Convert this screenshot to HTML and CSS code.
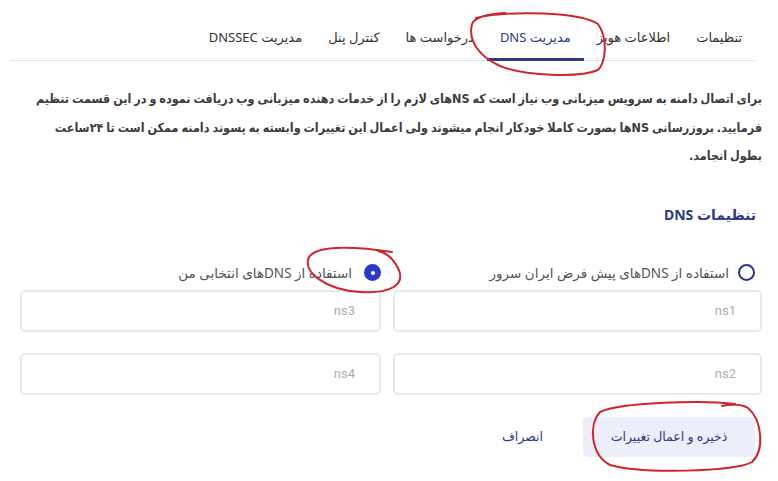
FILE: index.html
```html
<!DOCTYPE html>
<html lang="fa" dir="rtl">
<head>
  <meta charset="UTF-8">
  <meta name="viewport" content="width=device-width, initial-scale=1.0">
  <title>مدیریت DNS</title>
  <link rel="stylesheet" href="styles.css">
</head>
<body>

  <nav class="tabs">
    <a class="tab">تنظیمات</a>
    <a class="tab">اطلاعات هویز</a>
    <a class="tab active">مدیریت DNS</a>
    <a class="tab">درخواست ها</a>
    <a class="tab">کنترل پنل</a>
    <a class="tab">مدیریت DNSSEC</a>
  </nav>

  <div class="page">
    <p class="intro">برای اتصال دامنه به سرویس میزبانی وب نیاز است که NSهای لازم را از خدمات دهنده میزبانی وب دریافت نموده و در این قسمت تنظیم فرمایید. بروزرسانی NSها بصورت کاملا خودکار انجام میشوند ولی اعمال این تغییرات وابسته به پسوند دامنه ممکن است تا ۲۴ساعت بطول انجامد.</p>

    <h3 class="section-title">تنظیمات DNS</h3>

    <div class="grid options">
      <label class="option">
        <input type="radio" name="dns-mode">
        <span class="radio"></span>
        استفاده از DNSهای پیش فرض ایران سرور
      </label>
      <label class="option">
        <input type="radio" name="dns-mode" checked>
        <span class="radio"></span>
        استفاده از DNSهای انتخابی من
      </label>
    </div>

    <div class="grid fields">
      <input class="field" type="text" placeholder="ns1">
      <input class="field" type="text" placeholder="ns3">
      <input class="field" type="text" placeholder="ns2">
      <input class="field" type="text" placeholder="ns4">
    </div>

    <div class="actions">
      <button class="btn-save">ذخیره و اعمال تغییرات</button>
      <button class="btn-cancel">انصراف</button>
    </div>
  </div>

  <!-- marker scribbles drawn on top -->
  <svg class="marks" width="778" height="481" viewBox="0 0 778 481">
    <path d="M476 18 C510 10, 580 12, 598 24 C608 38, 606 62, 598 70 C580 78, 525 76, 500 66 C478 56, 468 40, 472 24 C475 16, 490 14, 505 13" />
    <path d="M392 252 C360 247, 318 244, 309 257 C302 272, 326 290, 360 292 C392 294, 406 284, 398 268 C392 257, 384 252, 378 251" />
    <path d="M735 404 C705 400, 620 402, 600 412 C588 425, 591 455, 610 465 C640 474, 735 472, 752 462 C765 450, 762 420, 748 408 C742 404, 730 404, 722 406" />
  </svg>

</body>
</html>
```

FILE: styles.css
```css
body {
  margin: 0;
  width: 778px;
  height: 481px;
  position: relative;
  overflow: hidden;
  background: #fff;
  font-family: 'Noto Sans', 'DejaVu Sans', sans-serif;
  color: #333;
}

.tabs {
  display: flex;
  margin: 0 23px 0 10px;
  border-bottom: 1px solid #e3e3e3;
}

.tab {
  padding: 27px 13px 11px;
  font-size: 13px;
  line-height: 20px;
  color: #333;
  cursor: pointer;
  border-bottom: 3px solid transparent;
  margin-bottom: -1px;
}

.tab.active {
  color: #2e3a87;
  border-bottom-color: #2e3a87;
}

.page {
  padding: 0 16px 0 20px;
}

.intro {
  margin: 24px 0 0;
  font-family: 'DejaVu Sans Condensed', 'DejaVu Sans', sans-serif;
  font-size: 12.5px;
  font-weight: bold;
  line-height: 28.5px;
  word-spacing: -1px;
  color: #3c3c3c;
}

.section-title {
  margin: 33px 0 0;
  padding-right: 6px;
  font-size: 14px;
  line-height: 22px;
  color: #2e3a87;
}

.grid {
  display: grid;
  grid-template-columns: 369px 1fr;
  column-gap: 12px;
}

.options {
  margin-top: 37px;
}

.option {
  display: flex;
  align-items: center;
  gap: 9px;
  padding-right: 7px;
  font-size: 13.5px;
  line-height: 20px;
  color: #555;
}

.option + .option {
  padding-right: 0;
  gap: 12px;
}

.option input {
  display: none;
}

.radio {
  width: 13px;
  height: 13px;
  border: 2px solid #2b3595;
  border-radius: 50%;
  flex-shrink: 0;
}

.option input:checked + .radio {
  background: #2a3bc9;
  border-color: #2a3bc9;
  position: relative;
}

.option input:checked + .radio::after {
  content: "";
  position: absolute;
  top: 4.5px;
  left: 4.5px;
  width: 4px;
  height: 4px;
  border-radius: 50%;
  background: #fff;
}

.fields {
  margin-top: 7px;
  row-gap: 21px;
}

.field {
  box-sizing: border-box;
  height: 42px;
  padding: 0 24px;
  border: 2px solid #e8e9eb;
  border-radius: 5px;
  font-family: 'Roboto', sans-serif;
  font-size: 13px;
  direction: rtl;
  outline: none;
}

.field::placeholder {
  color: #a9adb3;
}

.actions {
  display: flex;
  gap: 20px;
  margin-top: 22px;
  padding-right: 7px;
}

.btn-save,
.btn-cancel {
  height: 40px;
  border: none;
  border-radius: 5px;
  font-family: 'Noto Sans', 'DejaVu Sans', sans-serif;
  font-size: 12.5px;
  color: #2e3a87;
  cursor: pointer;
}

.btn-save {
  width: 172px;
  background: #eceefa;
}

.btn-cancel {
  padding: 0 20px;
  background: none;
}

.marks {
  position: absolute;
  top: 0;
  left: 0;
  pointer-events: none;
}

.marks path {
  fill: none;
  stroke: #d0262b;
  stroke-width: 2;
  stroke-linecap: round;
}
```
